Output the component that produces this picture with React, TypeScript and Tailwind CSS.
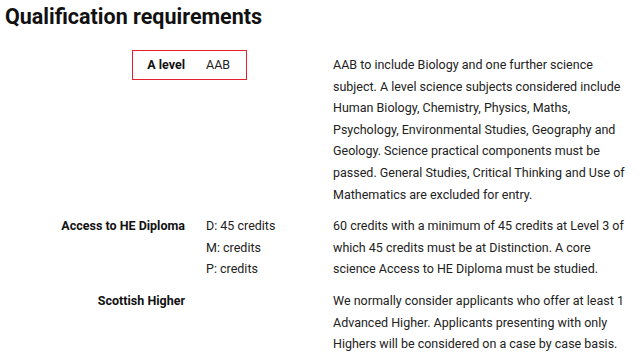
const rows = [
  {
    label: 'A level',
    values: ['AAB'],
    highlight: true,
    desc: 'AAB to include Biology and one further science subject. A level science subjects considered include Human Biology, Chemistry, Physics, Maths, Psychology, Environmental Studies, Geography and Geology. Science practical components must be passed. General Studies, Critical Thinking and Use of Mathematics are excluded for entry.',
  },
  {
    label: 'Access to HE Diploma',
    values: ['D: 45 credits', 'M: credits', 'P: credits'],
    desc: '60 credits with a minimum of 45 credits at Level 3 of which 45 credits must be at Distinction. A core science Access to HE Diploma must be studied.',
  },
  {
    label: 'Scottish Higher',
    values: [],
    desc: 'We normally consider applicants who offer at least 1 Advanced Higher. Applicants presenting with only Highers will be considered on a case by case basis.',
  },
];

export default function App() {
  return (
    <main className="w-[640px] h-[355px] overflow-hidden bg-white font-['Roboto',sans-serif] text-[#222]">
      <h2 className="pl-[5px] pt-[3px] text-[21.5px] font-bold leading-[28px] text-[#111]">Qualification requirements</h2>

      <div className="mt-[23px] flex flex-col gap-[10px]">
        {rows.map((row) => (
          <div key={row.label} className="relative flex text-[12.5px] leading-[21.6px]">
            {row.highlight && (
              <div className="pointer-events-none absolute left-[132px] top-[-4px] h-[30px] w-[115px] border-[1.5px] border-[#e3202e]" />
            )}
            <div className="w-[185px] shrink-0 text-right font-bold text-[#111]">{row.label}</div>
            <div className="ml-[21px] w-[127px] shrink-0">
              {row.values.map((v) => (
                <div key={v}>{v}</div>
              ))}
            </div>
            <p className="w-[300px]">{row.desc}</p>
          </div>
        ))}
      </div>
    </main>
  );
}
